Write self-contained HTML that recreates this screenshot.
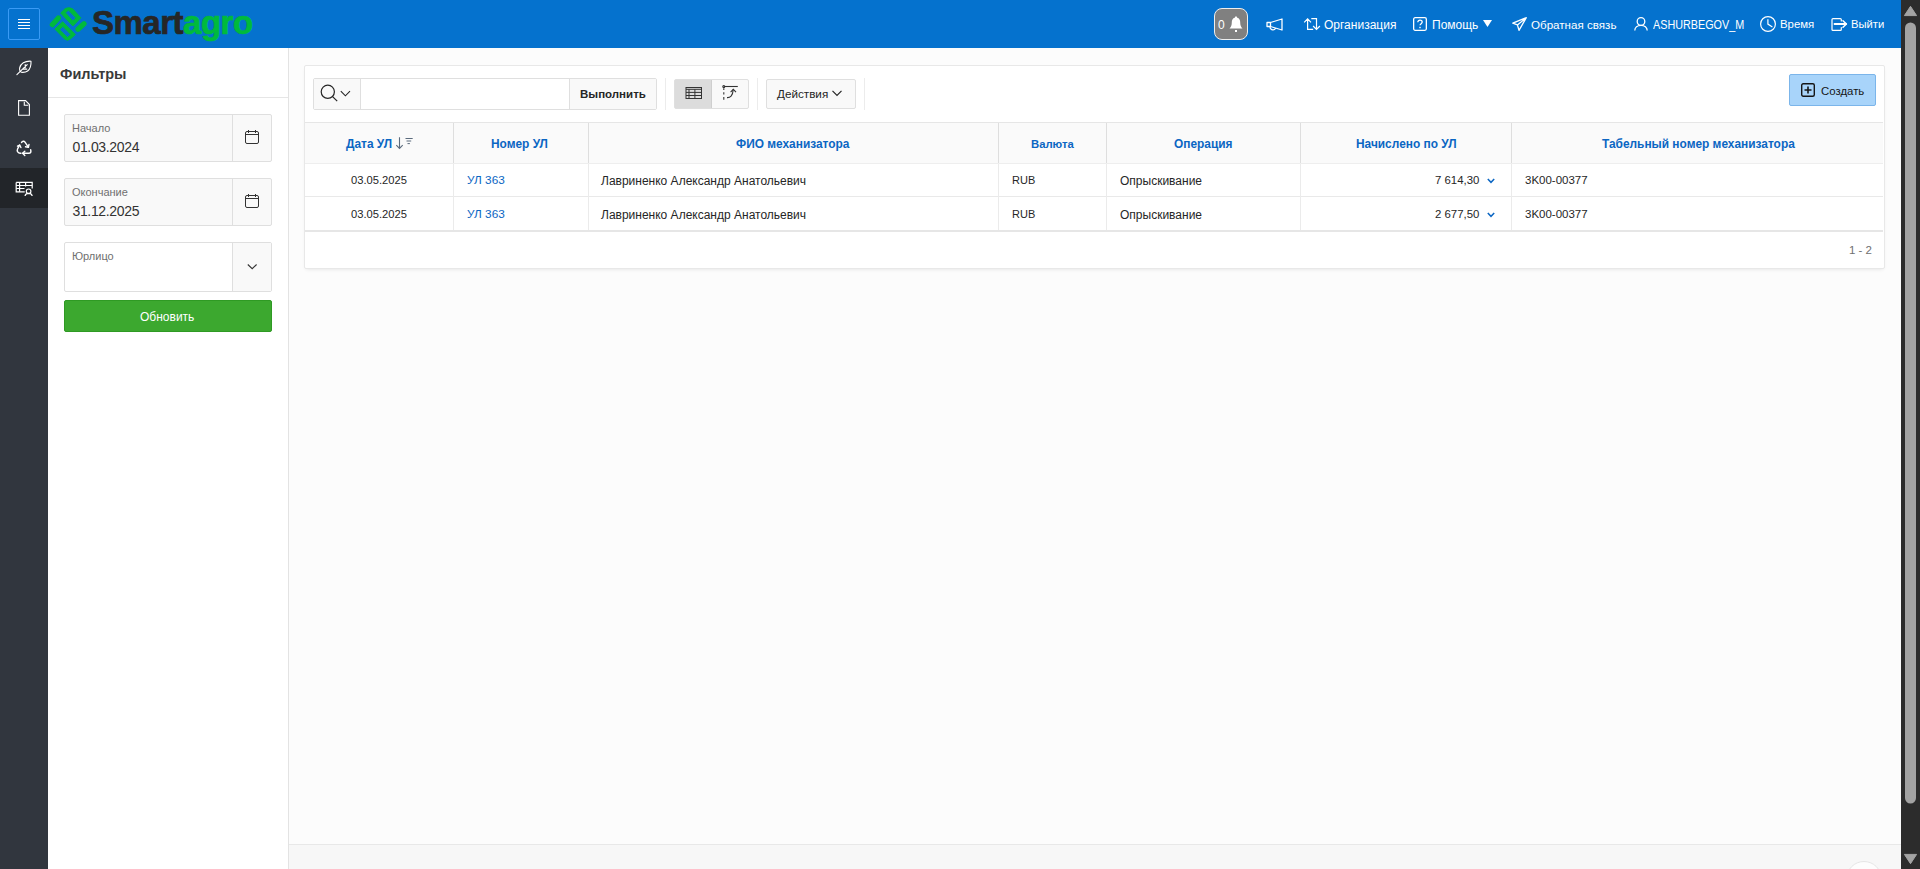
<!DOCTYPE html>
<html><head><meta charset="utf-8">
<style>
*{box-sizing:border-box;margin:0;padding:0}
html,body{width:1920px;height:869px;overflow:hidden;background:#fcfcfc;font-family:"Liberation Sans",sans-serif;color:#262626}
.abs{position:absolute}
#hdr{position:absolute;left:0;top:0;width:1901px;height:48px;background:#0572ce}
#nav{position:absolute;left:0;top:48px;width:48px;height:821px;background:#31363e}
#filt{position:absolute;left:48px;top:48px;width:241px;height:821px;background:#fff;border-right:1px solid #e3e3e3}
#foot{position:absolute;left:289px;top:844px;width:1612px;height:25px;background:#f7f7f7;border-top:1px solid #e8e8e8;overflow:hidden}
#sb{position:absolute;left:1901px;top:0;width:19px;height:869px;background:#2c2c2c}
.t{position:absolute;white-space:nowrap;line-height:1}
.hl{color:#fff;font-size:12px}
svg{position:absolute;overflow:visible}
.fld{position:absolute;left:64px;width:208px;height:48px;background:#f9f9f9;border:1px solid #dfdfdf;border-radius:2px}
.fld .btn{position:absolute;right:0;top:0;width:39px;height:46px;border-left:1px solid #dfdfdf}
.lbl{position:absolute;left:7px;font-size:11px;color:#707070;white-space:nowrap;line-height:1}
.val{position:absolute;left:7.5px;font-size:14px;letter-spacing:-0.35px;color:#333;white-space:nowrap;line-height:1}
#reg{position:absolute;left:304px;top:65px;width:1581px;height:204px;background:#fff;border:1px solid #e8e8e8;border-radius:2px;box-shadow:0 2px 4px -2px rgba(0,0,0,.12)}
.th{position:absolute;font-weight:bold;font-size:11.9px;color:#0b66c3;white-space:nowrap;line-height:1;margin-top:1px}
.td{position:absolute;font-size:12px;color:#262626;white-space:nowrap;line-height:1}
.lnk{color:#0b66c3}
</style></head><body>
<div id="hdr">
  <div class="abs" style="left:8px;top:8px;width:32px;height:32px;border:1px solid #3a9bf5;border-radius:2px"></div>
  <div class="abs" style="left:18px;top:19px;width:12px;height:1px;background:#fff"></div>
  <div class="abs" style="left:18px;top:22px;width:12px;height:1px;background:#fff"></div>
  <div class="abs" style="left:18px;top:25px;width:12px;height:1px;background:#fff"></div>
  <div class="abs" style="left:18px;top:28px;width:12px;height:1px;background:#fff"></div>
  <!-- logo -->
  <svg style="left:0;top:0" width="100" height="48" viewBox="0 0 100 48">
    <g fill="#00ba3c" stroke="#00ba3c" stroke-width="1" stroke-linejoin="round" fill-rule="evenodd">
      <path d="M60.7 13L65.2 8.6Q68.7 6.6 72.6 8.8L80.8 17.8L72.9 26L60.7 13Z M65.35 12.84L68.45 10.04L76.05 17.86L72.95 21.16Z"/>
      <path d="M62.7 21.8L75.3 34.6L69.8 39.4Q67.3 41 64.8 39.2L54.9 29.1Z M59.35 29.64L62.85 26.34L70.95 34.46L67.45 37.56Z"/>
    </g>
    <g stroke="#00ba3c" stroke-width="5.2" stroke-linecap="round">
      <line x1="52.3" y1="24.7" x2="58.4" y2="18"/>
      <line x1="78" y1="29.2" x2="84" y2="23.8"/>
    </g>
  </svg>
  <div class="t" style="left:92px;top:6px;font-size:33px;font-weight:bold;letter-spacing:-0.5px;color:#262626;-webkit-text-stroke:0.7px #262626">Smart<span style="color:#00ba3c;-webkit-text-stroke:0.7px #00ba3c">agro</span></div>

  <!-- right nav -->
  <div class="abs" style="left:1214px;top:8px;width:34px;height:32px;background:#808080;border:1px solid #eeeeee;border-radius:8px"></div>
  <div class="t hl" style="left:1218px;top:19px">0</div>
  <svg style="left:1229px;top:16px" width="14" height="16" viewBox="0 0 14 16"><path d="M7 0.5c.8 0 1.2.6 1.2 1.2 2.2.5 3 2.3 3 4.6 0 3 .6 4.5 2.3 6.2H0.5c1.7-1.7 2.3-3.2 2.3-6.2 0-2.3.8-4.1 3-4.6C5.8 1.1 6.2.5 7 .5z" fill="#fff"/><rect x="6" y="14" width="2" height="2" fill="#fff"/></svg>
  <svg style="left:1266px;top:18px" width="17" height="13" viewBox="0 0 17 13"><path d="M1 4.5h3.5L16 1v11L4.5 8.5H1z M4.5 4.5v4 M4 8.5a3 3 0 0 0 5.5 2" fill="none" stroke="#fff" stroke-width="1.3" stroke-linejoin="round"/></svg>
  <svg style="left:1298px;top:12px" width="32" height="24" viewBox="1298 12 32 24"><g fill="none" stroke="#fff" stroke-width="1.2"><path d="M1307.6 19v10.4h5.6M1304.2 22.3l3.4-3.4 3.4 3.4M1311.3 18.6h5.2v10.6M1313.1 26l3.4 3.4 3.4-3.4"/></g></svg>
  <div class="t hl" style="left:1324px;top:19px">Организация</div>
  <svg style="left:1413px;top:17px" width="14" height="14" viewBox="0 0 14 14"><rect x="0.65" y="0.65" width="12.7" height="12.7" rx="1.5" fill="none" stroke="#fff" stroke-width="1.3"/><path d="M4.8 5.2c0-1.3 1-2.1 2.2-2.1s2.2.8 2.2 2c0 1.5-2.1 1.6-2.1 3.2" fill="none" stroke="#fff" stroke-width="1.3"/><rect x="6.3" y="9.8" width="1.4" height="1.4" fill="#fff"/></svg>
  <div class="t hl" style="left:1432px;top:19px">Помощь</div>
  <svg style="left:1483px;top:20px" width="9" height="7" viewBox="0 0 9 7"><path d="M0 0h9L4.5 7z" fill="#fff"/></svg>
  <svg style="left:1512px;top:17px" width="15" height="14" viewBox="0 0 15 14"><path d="M14.3 0.7L0.8 6.2l4.6 1.7 1.6 5.4z M14.3 0.7L5.4 7.9" fill="none" stroke="#fff" stroke-width="1.3" stroke-linejoin="round"/></svg>
  <div class="t hl" style="left:1531px;top:19px;font-size:11.6px">Обратная связь</div>
  <svg style="left:1634px;top:17px" width="14" height="14" viewBox="0 0 14 14"><circle cx="7" cy="4.5" r="3.8" fill="none" stroke="#fff" stroke-width="1.3"/><path d="M0.8 13.5c0-3 2.6-5.2 6.2-5.2s6.2 2.2 6.2 5.2" fill="none" stroke="#fff" stroke-width="1.3"/></svg>
  <div class="t hl" style="left:1653px;top:19px;font-size:12px;transform:scaleX(0.9);transform-origin:0 0">ASHURBEGOV_M</div>
  <svg style="left:1755px;top:12px" width="26" height="24" viewBox="1755 12 26 24"><g fill="none" stroke="#fff" stroke-width="1.2"><circle cx="1768" cy="24" r="7.4"/><path d="M1767.9 19.2v4.9l4.5 2.8"/></g></svg>
  <div class="t hl" style="left:1780px;top:19px;font-size:11.4px">Время</div>
  <svg style="left:1826px;top:12px" width="26" height="24" viewBox="1826 12 26 24"><g fill="none" stroke="#fff" stroke-width="1.2" stroke-linecap="round" stroke-linejoin="round"><path d="M1841.3 21V19.6c0-.6-.4-1-1-1H1833c-.6 0-1 .4-1 1V29.4c0 .6.4 1 1 1h7.3c.6 0 1-.4 1-1V27.6"/><path d="M1834.5 24h11.6" stroke-width="1.8"/><path d="M1843 20.7l3.4 3.3-3.4 3.3" stroke-width="1.5"/></g></svg>
  <div class="t hl" style="left:1851px;top:19px;font-size:11.25px">Выйти</div>
</div>

<div id="nav">
  <div class="abs" style="left:0;top:120px;width:48px;height:40px;background:#222529"></div>
  <svg style="left:0;top:0" width="48" height="40" viewBox="0 48 48 40"><g fill="none" stroke="#fff" stroke-width="1.1" stroke-linecap="round" stroke-linejoin="round"><path d="M31 61.2C25 60.8 20.3 63.5 19.6 68.2 19.3 71 20.6 72.4 22.8 72.4 26.5 72.3 29.3 70.3 30.4 66.8 31 65 31.1 63 31 61.2Z"/><path d="M16.9 74.6L27.2 64.6M25.2 64.6v3.2M23.2 69.1h3.6"/></g></svg>
  <svg style="left:0;top:40px" width="48" height="40" viewBox="0 88 48 40"><g fill="none" stroke="#fff" stroke-width="1.1" stroke-linejoin="miter"><path d="M18.6 100.6h6.9l3.9 3.9v10.8H18.6z"/><path d="M24.3 101.8v3.5h4"/></g></svg>
  <svg style="left:0;top:80px" width="48" height="40" viewBox="0 128 48 40"><g fill="none" stroke="#fff" stroke-width="1.4" stroke-linecap="round" stroke-linejoin="round"><path d="M21.5 142.5c1-1.5 2.5-1.8 3.5-.3l3.3 5"/><path d="M25.5 146.8l2.9.6.6-3"/><path d="M19.6 145.2l-2 3.6c-.6 1.2-.5 2.2.3 3.4.5.7 1.3 1 2.2 1h.9"/><path d="M17.5 146.2l2.2-1.2 1.2 2.5"/><path d="M30.7 149.8l.2 1.5c0 1.2-.8 2-2 2H22.8"/><path d="M24.8 151.2l-2.2 2.1 2.2 2.2"/></g></svg>
  <svg style="left:0;top:120px" width="48" height="40" viewBox="0 168 48 40"><g fill="none" stroke="#fff" stroke-width="1.2"><path d="M16.2 182.4h16v6.1M16.2 182.4v9.4h8.5"/><path d="M16.2 185.5h16M16.2 188.5h8.3M19.6 182.4v9.4M25.6 182.4v4"/><circle cx="28.6" cy="191.3" r="2.3"/><path d="M25 196c.3-1.6 1.7-2.6 3.6-2.6s3.3 1 3.6 2.6"/></g></svg>
</div>

<div id="filt">
  <div class="t" style="left:12px;top:18.5px;font-size:14.5px;font-weight:bold;color:#3a3a3a">Фильтры</div>
  <div class="abs" style="left:0;top:49px;width:240px;height:1px;background:#e6e6e6"></div>
</div>

<div class="fld" style="top:114px"><div class="lbl" style="top:8px">Начало</div><div class="val" style="top:25px">01.03.2024</div><div class="btn"></div></div>
<div class="fld" style="top:178px"><div class="lbl" style="top:8px">Окончание</div><div class="val" style="top:25px">31.12.2025</div><div class="btn"></div></div>
<div class="fld" style="top:242px;height:50px;background:#fff"><div class="lbl" style="top:8px">Юрлицо</div><div class="btn" style="height:48px;background:#f9f9f9"></div></div>
<div class="abs" style="left:64px;top:300px;width:208px;height:32px;background:#3ca82f;border:1px solid #2f9a24;border-radius:2px"></div>
<div class="t" style="left:140px;top:311px;font-size:12px;color:#fff">Обновить</div>

<svg style="left:240px;top:125px" width="24" height="24" viewBox="0 0 24 24"><g fill="none" stroke="#333" stroke-width="1"><rect x="5.5" y="6.5" width="13" height="12" rx="1.5"/><path d="M5.5 9.5h13M8.5 5v3M15.5 5v3"/></g></svg>
<svg style="left:240px;top:189px" width="24" height="24" viewBox="0 0 24 24"><g fill="none" stroke="#333" stroke-width="1"><rect x="5.5" y="6.5" width="13" height="12" rx="1.5"/><path d="M5.5 9.5h13M8.5 5v3M15.5 5v3"/></g></svg>
<svg style="left:240px;top:254px" width="24" height="24" viewBox="0 0 24 24"><path d="M7.8 10.5l4.4 4.2 4.4-4.2" fill="none" stroke="#333" stroke-width="1.1"/></svg>
<div id="reg"></div>
<!-- toolbar -->
<div class="abs" style="left:313px;top:78px;width:344px;height:32px;border:1px solid #dfdfdf;border-radius:2px;background:#fff"></div>
<div class="abs" style="left:314px;top:79px;width:47px;height:30px;background:#f9f9f9;border-right:1px solid #dfdfdf"></div>
<svg style="left:296px;top:60px" width="80" height="60" viewBox="296 60 80 60"><g fill="none" stroke="#262626" stroke-width="1.2"><circle cx="327.8" cy="91.8" r="6.6"/><path d="M332.6 96.6l4.6 4.6"/><path d="M340.8 91.2l4.6 4.6 4.6-4.6" stroke-width="1.1"/></g></svg>
<div class="abs" style="left:569px;top:79px;width:87px;height:30px;background:#f9f9f9;border-left:1px solid #dfdfdf"></div>
<div class="t" style="left:580px;top:89px;font-size:11.5px;font-weight:bold;color:#262626">Выполнить</div>
<div class="abs" style="left:665px;top:78px;width:1px;height:32px;background:#ececec"></div>
<div class="abs" style="left:674px;top:79px;width:75px;height:30px;border:1px solid #dfdfdf;border-radius:2px;background:#f9f9f9"></div>
<div class="abs" style="left:675px;top:80px;width:37px;height:28px;background:#dcdcdc;border-right:1px solid #cfcfcf"></div>
<svg style="left:680px;top:82px" width="64" height="24" viewBox="680 82 64 24"><g fill="none" stroke="#333" stroke-width="1"><rect x="686" y="87.5" width="15.5" height="11"/><path d="M686 89.3h15.5M686 92.4h15.5M686 95.5h15.5M689 89.3v9.2M694.9 89.3v9.2"/></g></svg>
<svg style="left:680px;top:82px" width="64" height="24" viewBox="680 82 64 24"><g fill="none" stroke="#333" stroke-width="1.1"><path d="M724.5 86.5h13.3"/><circle cx="723.8" cy="86.6" r="1"/><path d="M723.8 88.3v1.6M723.8 92.2v2.2M723.8 97.1v2.7"/><path d="M727 97.6c3 .2 5.8-1.5 6.2-8"/><path d="M730.6 92.2l2.7-2.8 2.7 2.8"/></g></svg>
<div class="abs" style="left:757px;top:78px;width:1px;height:32px;background:#ececec"></div>
<div class="abs" style="left:766px;top:79px;width:90px;height:30px;border:1px solid #dfdfdf;border-radius:2px;background:#f9f9f9"></div>
<div class="t" style="left:777px;top:88px;font-size:11.7px;color:#262626">Действия</div>
<svg style="left:832px;top:90px" width="10" height="7" viewBox="0 0 10 7"><path d="M0.5 0.8l4.5 4.5 4.5-4.5" stroke="#262626" stroke-width="1.2" fill="none"/></svg>
<div class="abs" style="left:864px;top:78px;width:1px;height:32px;background:#ececec"></div>
<div class="abs" style="left:1789px;top:74px;width:87px;height:32px;background:#a8d4fa;border:1px solid #7bb5ea;border-radius:2px"></div>
<svg style="left:1801px;top:83px" width="14" height="14" viewBox="0 0 14 14"><rect x="0.7" y="0.7" width="12.6" height="12.6" rx="1.5" fill="none" stroke="#161616" stroke-width="1.4"/><path d="M7 3.5v7 M3.5 7h7" stroke="#161616" stroke-width="1.6"/></svg>
<div class="t" style="left:1821px;top:86px;font-size:11.4px;color:#161616">Создать</div>

<!-- table -->
<div class="abs" style="left:305px;top:122px;width:1578px;height:1px;background:#e6e6e6"></div>
<div class="abs" style="left:305px;top:123px;width:1578px;height:40px;background:#fafafa"></div>
<div class="abs" style="left:305px;top:163px;width:1578px;height:1px;background:#eeeeee"></div>
<div class="abs" style="left:305px;top:196px;width:1578px;height:1px;background:#e9e9e9"></div>
<div class="abs" style="left:305px;top:230px;width:1578px;height:2px;background:#e6e6e6"></div>
<div class="abs" style="left:453px;top:123px;width:1px;height:40px;background:#dedede"></div><div class="abs" style="left:453px;top:164px;width:1px;height:66px;background:#ebebeb"></div>
<div class="abs" style="left:588px;top:123px;width:1px;height:40px;background:#dedede"></div><div class="abs" style="left:588px;top:164px;width:1px;height:66px;background:#ebebeb"></div>
<div class="abs" style="left:998px;top:123px;width:1px;height:40px;background:#dedede"></div><div class="abs" style="left:998px;top:164px;width:1px;height:66px;background:#ebebeb"></div>
<div class="abs" style="left:1106px;top:123px;width:1px;height:40px;background:#dedede"></div><div class="abs" style="left:1106px;top:164px;width:1px;height:66px;background:#ebebeb"></div>
<div class="abs" style="left:1300px;top:123px;width:1px;height:40px;background:#dedede"></div><div class="abs" style="left:1300px;top:164px;width:1px;height:66px;background:#ebebeb"></div>
<div class="abs" style="left:1511px;top:123px;width:1px;height:40px;background:#dedede"></div><div class="abs" style="left:1511px;top:164px;width:1px;height:66px;background:#ebebeb"></div>
<div class="th" style="left:346px;top:138px">Дата УЛ</div>
<svg style="left:390px;top:130px" width="30" height="24" viewBox="390 130 30 24"><g fill="none" stroke="#5b6b7d" stroke-width="1.1"><path d="M399.5 137.3v11 M396.3 145.2l3.2 3.3 3.2-3.3"/><path d="M405.5 138.5h7.2 M406.5 141h4.7 M407.5 143.6h2.4" stroke-width="1"/></g></svg>
<div class="th" style="left:491px;top:138px">Номер УЛ</div>
<div class="th" style="left:736px;top:138px">ФИО механизатора</div>
<div class="th" style="left:1031px;top:138px;font-size:11.3px">Валюта</div>
<div class="th" style="left:1174px;top:138px">Операция</div>
<div class="th" style="left:1356px;top:138px">Начислено по УЛ</div>
<div class="th" style="left:1602px;top:138px">Табельный номер механизатора</div>
<div class="td" style="left:351px;top:175px;font-size:11.2px">03.05.2025</div>
<div class="td lnk" style="left:467px;top:175px;font-size:11.8px">УЛ 363</div>
<div class="td" style="left:601px;top:175px">Лавриненко Александр Анатольевич</div>
<div class="td" style="left:1012px;top:175px;font-size:11px">RUB</div>
<div class="td" style="left:1120px;top:175px">Опрыскивание</div>
<div class="td" style="left:1435px;top:175px;font-size:11.4px">7 614,30</div>
<svg style="left:1487px;top:178px" width="8" height="6" viewBox="0 0 8 6"><path d="M0.8 1l3.2 3.3 3.2-3.3" stroke="#0b66c3" stroke-width="1.5" fill="none"/></svg>
<div class="td" style="left:1525px;top:175px;font-size:11.5px">3K00-00377</div>
<div class="td" style="left:351px;top:209px;font-size:11.2px">03.05.2025</div>
<div class="td lnk" style="left:467px;top:209px;font-size:11.8px">УЛ 363</div>
<div class="td" style="left:601px;top:209px">Лавриненко Александр Анатольевич</div>
<div class="td" style="left:1012px;top:209px;font-size:11px">RUB</div>
<div class="td" style="left:1120px;top:209px">Опрыскивание</div>
<div class="td" style="left:1435px;top:209px;font-size:11.4px">2 677,50</div>
<svg style="left:1487px;top:212px" width="8" height="6" viewBox="0 0 8 6"><path d="M0.8 1l3.2 3.3 3.2-3.3" stroke="#0b66c3" stroke-width="1.5" fill="none"/></svg>
<div class="td" style="left:1525px;top:209px;font-size:11.5px">3K00-00377</div>
<div class="td" style="left:1849px;top:245px;font-size:11.5px;color:#707070">1 - 2</div>

<div id="foot"><div class="abs" style="left:1557px;top:16px;width:36px;height:36px;border-radius:50%;background:#fdfdfd;border:1px solid #e6e6e6"></div></div>
<div id="sb">
<svg style="left:0;top:0" width="19" height="869" viewBox="1901 0 19 869"><path d="M1910.5 6.3L1916.6 15.6H1904.4z" fill="#a3a3a3" stroke="#a3a3a3" stroke-width="1" stroke-linejoin="round"/><rect x="1905" y="22.5" width="11" height="781" rx="5.5" fill="#a3a3a3"/><path d="M1910.5 863.7L1916.6 854.4H1904.4z" fill="#a3a3a3" stroke="#a3a3a3" stroke-width="1" stroke-linejoin="round"/></svg>
</div>
</body></html>
